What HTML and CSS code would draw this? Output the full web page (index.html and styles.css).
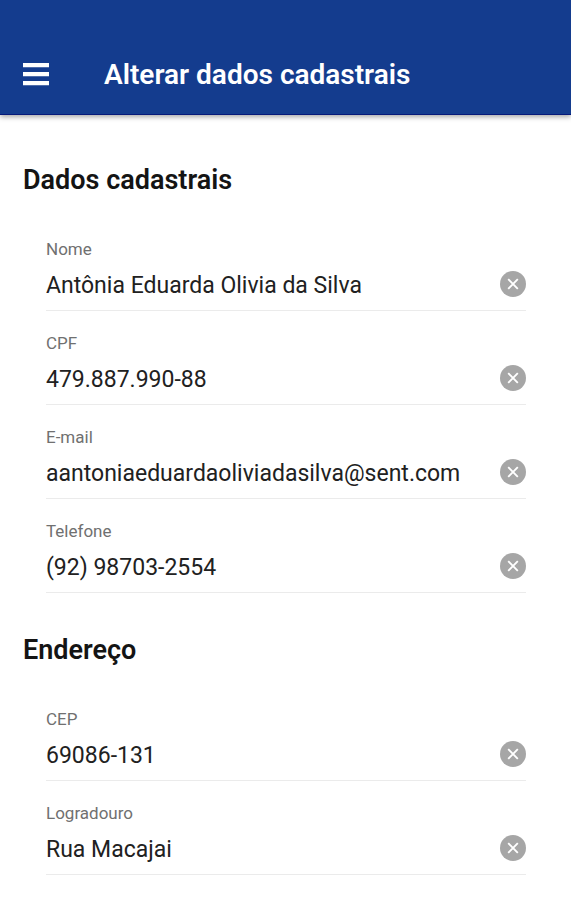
FILE: index.html
```html
<!DOCTYPE html>
<html lang="pt-BR">
<head>
<meta charset="utf-8">
<meta name="viewport" content="width=device-width, initial-scale=1">
<title>Alterar dados cadastrais</title>
<link rel="stylesheet" href="styles.css">
</head>
<body>
<svg class="symbols" aria-hidden="true">
  <symbol id="clear" viewBox="0 0 26 26">
    <circle cx="13" cy="13" r="13" fill="#a6a6a6"/>
    <path d="M8.2 8.2l9.6 9.6M17.8 8.2l-9.6 9.6" stroke="#fff" stroke-width="1.9" fill="none"/>
  </symbol>
</svg>
<header class="topbar">
  <button class="menu" type="button" aria-label="Menu">
    <svg viewBox="0 0 26 24" width="26" height="24"><path d="M0 2.2h26M0 11.2h26M0 20.2h26" stroke="#fff" stroke-width="4.2"/></svg>
  </button>
  <h1 class="title">Alterar dados cadastrais</h1>
</header>
<main class="content">
  <section class="group">
    <h2 class="heading">Dados cadastrais</h2>
    <div class="field">
      <label class="label" for="nome">Nome</label>
      <div class="row"><input class="input" id="nome" type="text" value="Antônia Eduarda Olivia da Silva"><button class="clear" type="button" aria-label="Limpar nome"><svg class="icon"><use href="#clear"/></svg></button></div>
    </div>
    <div class="field">
      <label class="label" for="cpf">CPF</label>
      <div class="row"><input class="input" id="cpf" type="text" value="479.887.990-88"><button class="clear" type="button" aria-label="Limpar CPF"><svg class="icon"><use href="#clear"/></svg></button></div>
    </div>
    <div class="field">
      <label class="label" for="email">E-mail</label>
      <div class="row"><input class="input" id="email" type="email" value="aantoniaeduardaoliviadasilva@sent.com"><button class="clear" type="button" aria-label="Limpar e-mail"><svg class="icon"><use href="#clear"/></svg></button></div>
    </div>
    <div class="field">
      <label class="label" for="telefone">Telefone</label>
      <div class="row"><input class="input" id="telefone" type="tel" value="(92) 98703-2554"><button class="clear" type="button" aria-label="Limpar telefone"><svg class="icon"><use href="#clear"/></svg></button></div>
    </div>
  </section>
  <section class="group">
    <h2 class="heading">Endereço</h2>
    <div class="field">
      <label class="label" for="cep">CEP</label>
      <div class="row"><input class="input" id="cep" type="text" value="69086-131"><button class="clear" type="button" aria-label="Limpar CEP"><svg class="icon"><use href="#clear"/></svg></button></div>
    </div>
    <div class="field">
      <label class="label" for="logradouro">Logradouro</label>
      <div class="row"><input class="input" id="logradouro" type="text" value="Rua Macajai"><button class="clear" type="button" aria-label="Limpar logradouro"><svg class="icon"><use href="#clear"/></svg></button></div>
    </div>
  </section>
</main>
</body>
</html>
```
FILE: styles.css
```css
* { box-sizing: border-box; }
body {
  margin: 0;
  background: #fff;
  color: #141414;
  font-family: Roboto, "Liberation Sans", sans-serif;
}
.symbols { position: absolute; width: 0; height: 0; }
button { padding: 0; border: 0; background: none; cursor: pointer; }
button svg { display: block; }
.topbar {
  display: flex;
  align-items: center;
  gap: 55px;
  padding: 54px 23px 19px;
  background: #143c8e;
  border-bottom: 1px solid #06197a;
  box-shadow: 0 2px 5px rgba(0, 0, 0, 0.35);
}
.title {
  margin: 0;
  color: #fff;
  font-size: 28px;
  font-weight: 600;
  line-height: 41px;
}
.content { padding: 45px 23px 24px; }
.group { margin-bottom: 37px; }
.heading {
  margin: 0 0 39px;
  font-size: 27px;
  font-weight: 600;
  line-height: 40px;
}
.field {
  margin: 0 22px 22px 23px;
  border-bottom: 1px solid #ebebeb;
}
.label {
  display: block;
  color: #707070;
  font-size: 17px;
  line-height: 20px;
}
.row { display: flex; align-items: center; padding: 5px 0 6px; }
.input {
  flex: 1;
  min-width: 0;
  height: 40px;
  padding: 2px 0 0;
  border: 0;
  outline: 0;
  background: none;
  color: #212121;
  font: 400 23px/38px Roboto, "Liberation Sans", sans-serif;
}
.icon { width: 26px; height: 26px; }
```
